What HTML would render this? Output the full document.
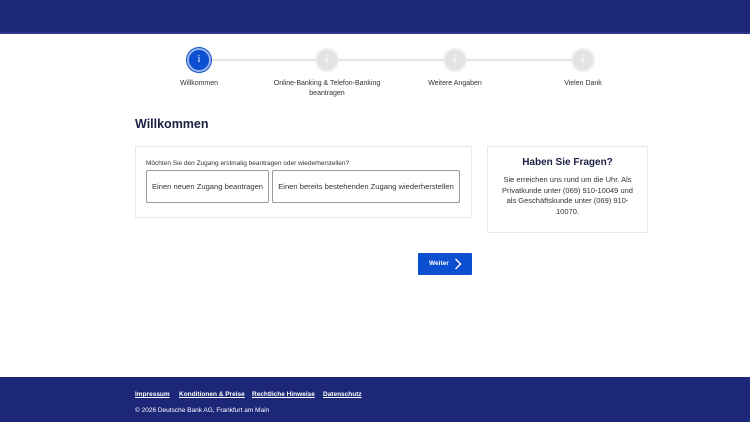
<!DOCTYPE html>
<html><head><meta charset="utf-8"><style>
*{margin:0;padding:0;box-sizing:border-box}
body{width:750px;height:422px;position:relative;background:#fff;font-family:"Liberation Sans",sans-serif;color:#1b1f44;overflow:hidden}
.a{position:absolute}
.hdr{left:0;top:0;width:750px;height:34px;background:#1d2777;border-bottom:2px solid #2d3a8c}
.line{top:59px;left:199px;width:384px;height:2px;background:#e4e4e4}
.c{width:24px;height:24px;border-radius:50%;top:48px;background:#e3e3e3;border:2px solid #efefef;color:#fff;font-size:10px;text-align:center;line-height:20px;font-family:"Liberation Serif",serif}
.c.on{background:#0c4fd1;border:2px solid #9bb6ea;box-shadow:0 0 0 1px #0c4fd1}
.lb{font-size:7px;color:#333;text-align:center;width:140px;top:79px;line-height:10px}
.box{border:1px solid #e9e9e9;background:#fff}
.btn{border:1px solid #9a9a9a;border-radius:2px;font-size:7.6px;color:#333;text-align:center;line-height:31px;top:170px;height:33px;white-space:nowrap}
.ftr{left:0;top:377px;width:750px;height:45px;background:#1d2777}
.fl{color:#fff;font-size:6.5px;text-decoration:underline;top:391px;font-weight:bold}
</style></head><body>
<div class="a hdr"></div>
<div class="a line"></div>
<div class="a c on" style="left:187px">i</div>
<div class="a c" style="left:315px">i</div>
<div class="a c" style="left:443px">i</div>
<div class="a c" style="left:571px">i</div>
<div class="a lb" style="left:129px">Willkommen</div>
<div class="a lb" style="left:257px">Online-Banking &amp; Telefon-Banking<br>beantragen</div>
<div class="a lb" style="left:385px">Weitere Angaben</div>
<div class="a lb" style="left:513px">Vielen Dank</div>
<div class="a" style="left:135px;top:117px;font-size:12.5px;font-weight:bold;color:#1b1f44">Willkommen</div>
<div class="a box" style="left:135px;top:146px;width:337px;height:72px"></div>
<div class="a" style="left:146px;top:160px;font-size:6.5px;color:#333">Möchten Sie den Zugang erstmalig beantragen oder wiederherstellen?</div>
<div class="a btn" style="left:146px;width:123px">Einen neuen Zugang beantragen</div>
<div class="a btn" style="left:272px;width:188px">Einen bereits bestehenden Zugang wiederherstellen</div>
<div class="a box" style="left:487px;top:146px;width:161px;height:87px"></div>
<div class="a" style="left:487px;top:157px;width:161px;text-align:center;font-size:10px;font-weight:bold;color:#1b1f44">Haben Sie Fragen?</div>
<div class="a" style="left:487px;top:175px;width:161px;text-align:center;font-size:7.5px;line-height:10.5px;color:#333;white-space:nowrap">Sie erreichen uns rund um die Uhr. Als<br>Privatkunde unter (069) 910-10049 und<br>als Geschäftskunde unter (069) 910-<br>10070.</div>
<div class="a" style="left:418px;top:253px;width:54px;height:22px;background:#0c4fd1;border-radius:1px;color:#fff;font-size:6.5px;font-weight:bold;line-height:22px;padding-left:11px">Weiter
<svg class="a" style="left:36px;top:5px" width="8" height="12" viewBox="0 0 8 12"><path d="M1.5 1 L6.5 6 L1.5 11" stroke="#fff" stroke-width="1.4" fill="none"/></svg></div>
<div class="a ftr"></div>
<div class="a fl" style="left:135px">Impressum</div>
<div class="a fl" style="left:179px">Konditionen &amp; Preise</div>
<div class="a fl" style="left:252px">Rechtliche Hinweise</div>
<div class="a fl" style="left:323px">Datenschutz</div>
<div class="a" style="left:135px;top:407px;color:#fff;font-size:6.5px">© 2026 Deutsche Bank AG, Frankfurt am Main</div>
</body></html>
